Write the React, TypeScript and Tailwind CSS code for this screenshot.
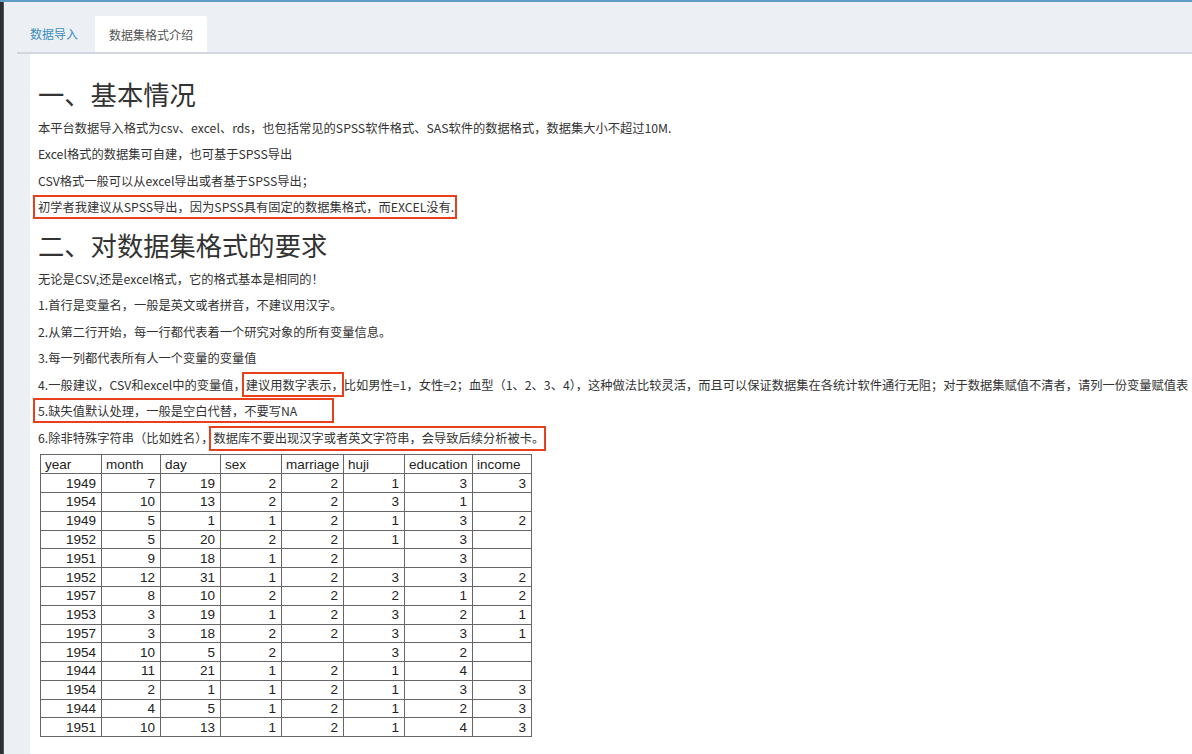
import React from "react";

const rows: (number | null)[][] = [
  [1949, 7, 19, 2, 2, 1, 3, 3],
  [1954, 10, 13, 2, 2, 3, 1, null],
  [1949, 5, 1, 1, 2, 1, 3, 2],
  [1952, 5, 20, 2, 2, 1, 3, null],
  [1951, 9, 18, 1, 2, null, 3, null],
  [1952, 12, 31, 1, 2, 3, 3, 2],
  [1957, 8, 10, 2, 2, 2, 1, 2],
  [1953, 3, 19, 1, 2, 3, 2, 1],
  [1957, 3, 18, 2, 2, 3, 3, 1],
  [1954, 10, 5, 2, null, 3, 2, null],
  [1944, 11, 21, 1, 2, 1, 4, null],
  [1954, 2, 1, 1, 2, 1, 3, 3],
  [1944, 4, 5, 1, 2, 1, 2, 3],
  [1951, 10, 13, 1, 2, 1, 4, 3],
];

const headers = ["year", "month", "day", "sex", "marriage", "huji", "education", "income"];
const widths = ["w-[61px]", "w-[59px]", "w-[60px]", "w-[61px]", "w-[62px]", "w-[61px]", "w-[68px]", "w-[59px]"];

function P({ children }: { children: React.ReactNode }) {
  return <p className="m-0 mb-[9.9px] text-[12.25px] leading-[16.6px] whitespace-nowrap">{children}</p>;
}

export default function App() {
  return (
    <div
      className="w-[1192px] h-[754px] overflow-hidden flex flex-col bg-[#ecf0f5] text-[#333]"
      style={{ fontFamily: '"Noto Sans CJK SC", sans-serif' }}
    >
      <div className="h-[2px] bg-[#5f9cc5] shrink-0" />
      <div className="flex flex-1 min-h-0">
        <div className="w-[4px] bg-[#2b3034] shrink-0 border-r border-[#55595c]" />
        <div className="flex-1 flex flex-col min-w-0">
          {/* tab bar */}
          <div className="h-[50px] shrink-0 pl-[13px] flex items-end">
            <div className="flex items-end gap-[3px] h-[37px]">
              <div className="h-full px-[13px] pt-[1px] flex items-center text-[12px] text-[#3c8dbc]">数据导入</div>
              <div className="h-full px-[14px] pt-[1px] flex items-center text-[12px] text-[#555] bg-white rounded-t-[3px] border-t border-x border-[#f0f0f0]">
                数据集格式介绍
              </div>
            </div>
          </div>
          <div className="h-[2px] shrink-0 ml-[13px] bg-[#d2d6de]" />
          {/* content */}
          <div className="flex-1 ml-[26px] bg-white pl-[8px] pt-[26px] overflow-hidden">
            <h1 className="m-0 mb-[11px] text-[26.3px] leading-[28.6px] font-normal">一、基本情况</h1>
            <P>本平台数据导入格式为csv、excel、rds，也包括常见的SPSS软件格式、SAS软件的数据格式，数据集大小不超过10M.</P>
            <P>Excel格式的数据集可自建，也可基于SPSS导出</P>
            <P>CSV格式一般可以从excel导出或者基于SPSS导出；</P>
            <P>
              <span className="relative inline-block">
                初学者我建议从SPSS导出，因为SPSS具有固定的数据集格式，而EXCEL没有.
                <span className="absolute -left-[5px] -right-[3px] -top-[4px] -bottom-[3px] border-2 border-[#e8401c] pointer-events-none" />
              </span>
            </P>
            <h1 className="m-0 mt-[15px] mb-[11.5px] text-[26.3px] leading-[28.6px] font-normal">二、对数据集格式的要求</h1>
            <P>无论是CSV,还是excel格式，它的格式基本是相同的！</P>
            <P>1.首行是变量名，一般是英文或者拼音，不建议用汉字。</P>
            <P>2.从第二行开始，每一行都代表着一个研究对象的所有变量信息。</P>
            <P>3.每一列都代表所有人一个变量的变量值</P>
            <P>
              4.一般建议，CSV和excel中的变量值，
              <span className="relative inline-block">
                建议用数字表示，
                <span className="absolute -left-[4px] right-0 -top-[5px] -bottom-[4px] border-2 border-[#e8401c] pointer-events-none" />
              </span>
              比如男性=1，女性=2；血型（1、2、3、4），这种做法比较灵活，而且可以保证数据集在各统计软件通行无阻；对于数据集赋值不清者，请列一份变量赋值表
            </P>
            <P>
              <span className="relative inline-block">
                5.缺失值默认处理，一般是空白代替，不要写NA
                <span className="absolute -left-[5px] w-[301px] -top-[5px] -bottom-[3px] border-2 border-[#e8401c] pointer-events-none" />
              </span>
            </P>
            <P>
              6.除非特殊字符串（比如姓名），
              <span className="relative inline-block">
                数据库不要出现汉字或者英文字符串，会导致后续分析被卡。
                <span className="absolute -left-[5px] -right-[2px] -top-[4px] -bottom-[5px] border-2 border-[#e8401c] pointer-events-none" />
              </span>
            </P>
            <table
              className="ml-[2px] -mt-[2px] border-collapse text-[13.5px] text-[#222]"
              style={{ fontFamily: '"Liberation Sans", Arial, sans-serif' }}
            >
              <thead>
                <tr>
                  {headers.map((h, i) => (
                    <td key={h} className={`${widths[i]} h-[19px] p-0 pl-[4px] text-left border border-[#666] leading-[17px]`}>
                      {h}
                    </td>
                  ))}
                </tr>
              </thead>
              <tbody>
                {rows.map((r, ri) => (
                  <tr key={ri}>
                    {r.map((v, ci) => (
                      <td key={ci} className={`${widths[ci]} h-[18.8px] p-0 pr-[5px] text-right border border-[#666] leading-[17px]`}>
                        {v ?? ""}
                      </td>
                    ))}
                  </tr>
                ))}
              </tbody>
            </table>
          </div>
        </div>
      </div>
    </div>
  );
}
